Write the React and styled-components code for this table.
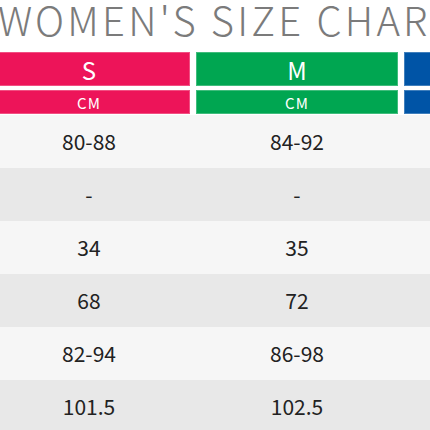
import React from 'react';
import styled, { createGlobalStyle } from 'styled-components';

const GlobalStyle = createGlobalStyle`
  html, body {
    margin: 0;
    padding: 0;
    background: #ffffff;
  }
  body {
    font-family: 'Noto Sans CJK SC', 'Noto Sans', sans-serif;
  }
`;

const Viewport = styled.div`
  width: 430px;
  height: 430px;
  overflow: hidden;
  background: #ffffff;
`;

const Sheet = styled.div`
  width: 618px;
  margin-left: -12px;
`;

const Title = styled.h1`
  margin: 0 0 13px 10px;
  font-size: 40px;
  line-height: 39px;
  font-weight: 300;
  letter-spacing: 3.2px;
  color: #7b7b7b;
  white-space: nowrap;
`;

const Columns = styled.div`
  display: grid;
  grid-template-columns: repeat(3, 202px);
  column-gap: 6px;
`;

const HeaderRow = styled(Columns)`
  margin-bottom: ${(p) => p.$bottom}px;
`;

const SizeCell = styled.div`
  height: ${(p) => p.$height}px;
  background: ${(p) => p.$color};
  box-shadow: inset 0 0 0 1px rgba(255, 255, 255, 0.25);
  color: #ffffff;
  display: flex;
  align-items: center;
  justify-content: center;
  font-size: ${(p) => p.$size}px;
  letter-spacing: ${(p) => (p.$small ? '1px' : '0')};
`;

const DataRow = styled(Columns)`
  height: 53px;
  background: ${(p) => (p.$dark ? '#e8e8e8' : '#f6f6f6')};
`;

const DataCell = styled.div`
  display: flex;
  align-items: center;
  justify-content: center;
  padding-bottom: 2px;
  font-size: 21px;
  color: #222222;
`;

const sizes = [
  { name: 'S', color: '#ed1459' },
  { name: 'M', color: '#00a651' },
  { name: 'L', color: '#0054a6' },
];

const rows = [
  ['80-88', '84-92', '88-96'],
  ['-', '-', '-'],
  ['34', '35', '36'],
  ['68', '72', '76'],
  ['82-94', '86-98', '90-102'],
  ['101.5', '102.5', '103.5'],
];

export default function App() {
  return (
    <>
      <GlobalStyle />
      <Viewport>
        <Sheet>
          <Title>WOMEN'S SIZE CHART</Title>
          <HeaderRow $bottom={4}>
            {sizes.map((s) => (
              <SizeCell key={s.name} $color={s.color} $height={34} $size={24}>
                {s.name}
              </SizeCell>
            ))}
          </HeaderRow>
          <HeaderRow $bottom={1}>
            {sizes.map((s) => (
              <SizeCell key={s.name} $color={s.color} $height={24} $size={15} $small>
                CM
              </SizeCell>
            ))}
          </HeaderRow>
          {rows.map((r, i) => (
            <DataRow key={i} $dark={i % 2 === 1}>
              {r.map((v, j) => (
                <DataCell key={j}>{v}</DataCell>
              ))}
            </DataRow>
          ))}
        </Sheet>
      </Viewport>
    </>
  );
}
